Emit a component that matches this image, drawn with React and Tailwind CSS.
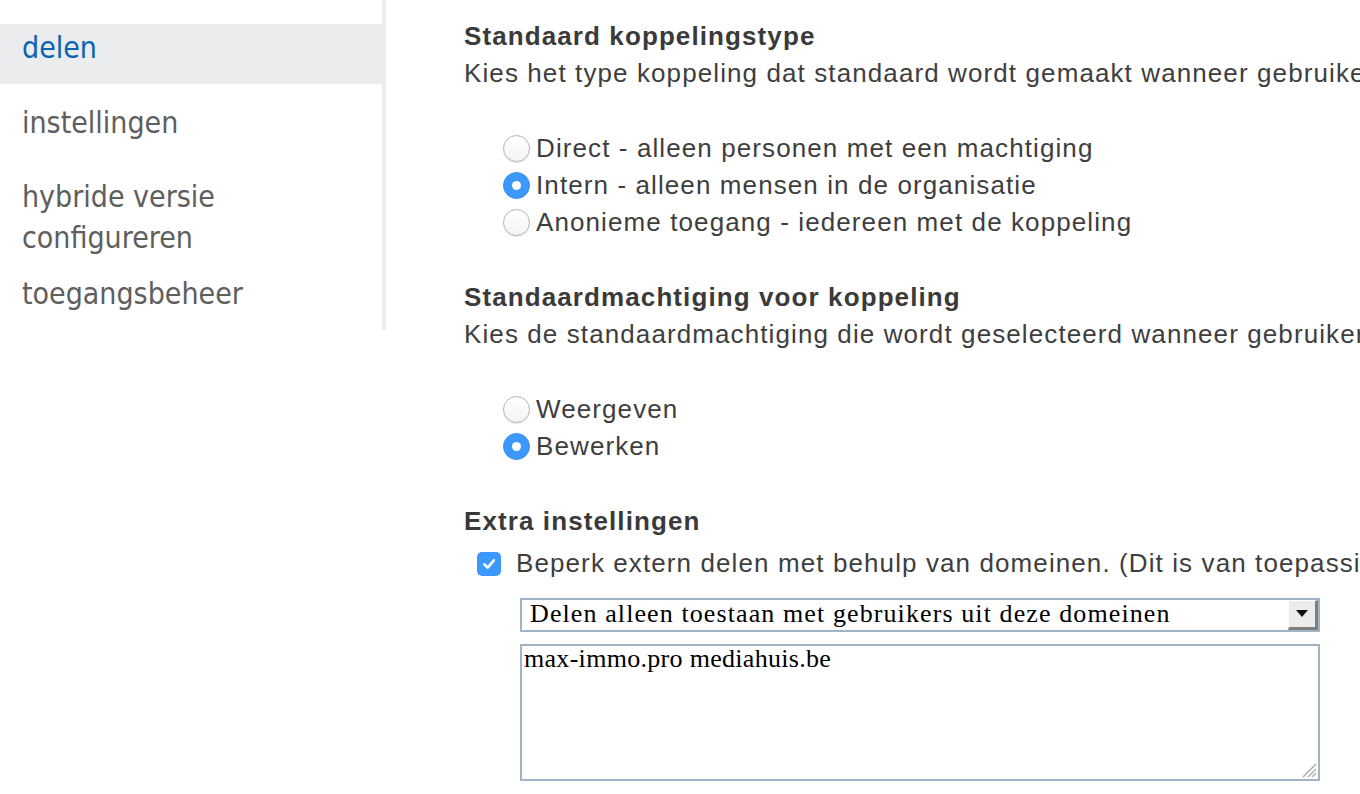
import React from "react";

function Radio({ checked, label }) {
  return (
    <div className="flex items-center h-[37px]">
      {checked ? (
        <span className="w-[27px] h-[27px] rounded-full bg-[#3b99fc] border border-[#3790ee] flex items-center justify-center shrink-0">
          <span className="w-[9px] h-[9px] rounded-full bg-white"></span>
        </span>
      ) : (
        <span className="w-[27px] h-[27px] rounded-full border border-[#b4b4b4] bg-gradient-to-b from-white to-[#f4f4f4] shadow-[0_1px_1px_rgba(0,0,0,0.1)] shrink-0"></span>
      )}
      <span className="ml-[6px] whitespace-nowrap">{label}</span>
    </div>
  );
}

export default function App() {
  return (
    <div className="w-[1360px] h-[794px] bg-white overflow-hidden flex">
      {/* Sidebar */}
      <div className="w-[386px] shrink-0 h-[330px] border-r-4 border-[#eaebec] font-['DejaVu_Sans_Condensed','DejaVu_Sans',sans-serif] text-[30px] leading-[41px] text-[#5e5e5e]">
        <div className="mt-[24px] h-[60px] bg-[#ebecee] pl-[22px] pt-[3px] text-[#0a64b4]">delen</div>
        <div className="pl-[22px] mt-[18px]">instellingen</div>
        <div className="pl-[22px] mt-[33px]">
          hybride versie
          <br />
          configureren
        </div>
        <div className="pl-[22px] mt-[15px]">toegangsbeheer</div>
      </div>

      {/* Main */}
      <div className="flex-1 min-w-0 pl-[78px] pt-[18px] font-['Liberation_Sans',Arial,sans-serif] text-[26px] leading-[37px] tracking-[1.1px] text-[#3e3e3e] whitespace-nowrap overflow-hidden">
        <div className="font-bold text-[#3a3a3a]">Standaard koppelingstype</div>
        <div className="overflow-hidden">Kies het type koppeling dat standaard wordt gemaakt wanneer gebruiker</div>

        <div className="mt-[38px] pl-[39px]">
          <Radio label="Direct - alleen personen met een machtiging" />
          <Radio checked label="Intern - alleen mensen in de organisatie" />
          <Radio label="Anonieme toegang - iedereen met de koppeling" />
        </div>

        <div className="mt-[38px] font-bold text-[#3a3a3a]">Standaardmachtiging voor koppeling</div>
        <div className="overflow-hidden">Kies de standaardmachtiging die wordt geselecteerd wanneer gebruiker</div>

        <div className="mt-[38px] pl-[39px]">
          <Radio label="Weergeven" />
          <Radio checked label="Bewerken" />
        </div>

        <div className="mt-[38px] font-bold text-[#3a3a3a]">Extra instellingen</div>
        <div className="mt-[5px] pl-[13px] flex items-center h-[37px]">
          <span className="w-[24px] h-[24px] rounded-[5px] bg-[#3b99fc] flex items-center justify-center shrink-0">
            <svg width="16" height="16" viewBox="0 0 16 16" fill="none">
              <path d="M3.5 8.5 L6.7 11.7 L12.8 4.3" stroke="white" strokeWidth="2.6" strokeLinecap="round" strokeLinejoin="round" />
            </svg>
          </span>
          <span className="ml-[15px] overflow-hidden">Beperk extern delen met behulp van domeinen. (Dit is van toepassi</span>
        </div>

        <div className="pl-[56px] mt-[16px] font-['Liberation_Serif','Times_New_Roman',serif] text-black">
          <div className="w-[800px] h-[34px] border-2 border-[#a0b4c5] flex items-stretch bg-white">
            <div className="flex-1 pl-[8px] text-[26px] leading-[28px] tracking-[1.1px] overflow-hidden">
              Delen alleen toestaan met gebruikers uit deze domeinen
            </div>
            <div className="w-[30px] bg-[#ececec] border-t border-l border-t-white border-l-white border-r-[3px] border-b-[3px] border-r-[#7f7f7f] border-b-[#7f7f7f] flex items-center justify-center">
              <svg width="12" height="8" viewBox="0 0 12 8">
                <path d="M0 0 H12 L6 7 Z" fill="#111" />
              </svg>
            </div>
          </div>
          <div className="relative mt-[12px] w-[800px] h-[137px] border-2 border-[#a0b4c5] bg-white">
            <div className="pl-[2px] text-[26px] leading-[26px] tracking-[0.3px]">max-immo.pro mediahuis.be</div>
            <svg className="absolute right-[1px] bottom-[1px]" width="18" height="18" viewBox="0 0 18 18">
              <path d="M17 4 L4 17 M17 9 L9 17 M17 13 L13 17" stroke="#b0b0b0" strokeWidth="1.5" />
            </svg>
          </div>
        </div>
      </div>
    </div>
  );
}
